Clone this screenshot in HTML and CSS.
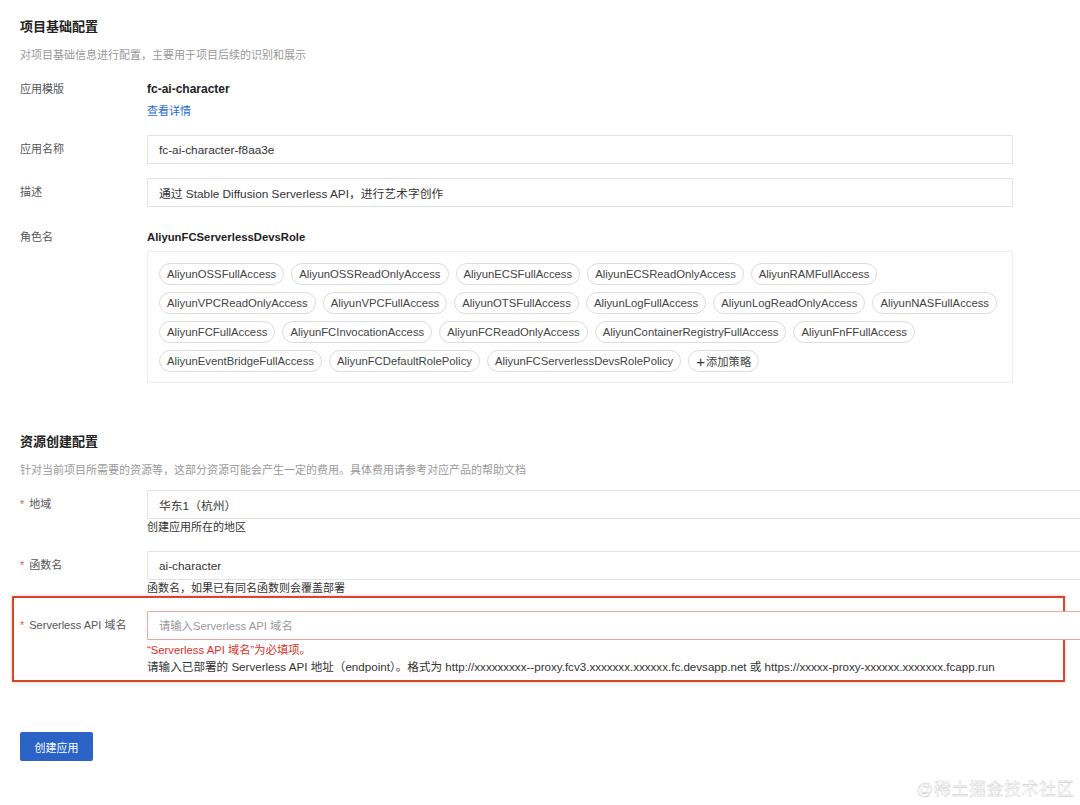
FILE: index.html
```html
<!DOCTYPE html>
<html lang="zh-CN">
<head>
  <meta charset="UTF-8" />
  <meta name="viewport" content="width=device-width, initial-scale=1" />
  <title>创建应用</title>
  <link rel="stylesheet" href="styles.css">
</head>
<body>
  <main class="page">
    <section class="block">
      <h2 class="block-title">项目基础配置</h2>
      <p class="block-desc">对项目基础信息进行配置，主要用于项目后续的识别和展示</p>

      <div class="row row-text">
        <div class="label">应用模版</div>
        <div class="control">
          <div class="value value-lg">fc-ai-character</div>
          <a class="link" href="#">查看详情</a>
        </div>
      </div>

      <div class="row row-input">
        <div class="label">应用名称</div>
        <div class="control">
          <input class="input" type="text" value="fc-ai-character-f8aa3e" />
        </div>
      </div>

      <div class="row row-input row-desc">
        <div class="label">描述</div>
        <div class="control">
          <input class="input" type="text" value="通过 Stable Diffusion Serverless API，进行艺术字创作" />
        </div>
      </div>

      <div class="row row-text row-role">
        <div class="label">角色名</div>
        <div class="control">
          <div class="value">AliyunFCServerlessDevsRole</div>
          <div class="tags">
            <div class="tag-row">
              <span class="tag">AliyunOSSFullAccess</span>
              <span class="tag">AliyunOSSReadOnlyAccess</span>
              <span class="tag">AliyunECSFullAccess</span>
              <span class="tag">AliyunECSReadOnlyAccess</span>
              <span class="tag">AliyunRAMFullAccess</span>
            </div>
            <div class="tag-row">
              <span class="tag">AliyunVPCReadOnlyAccess</span>
              <span class="tag">AliyunVPCFullAccess</span>
              <span class="tag">AliyunOTSFullAccess</span>
              <span class="tag">AliyunLogFullAccess</span>
              <span class="tag">AliyunLogReadOnlyAccess</span>
              <span class="tag">AliyunNASFullAccess</span>
            </div>
            <div class="tag-row">
              <span class="tag">AliyunFCFullAccess</span>
              <span class="tag">AliyunFCInvocationAccess</span>
              <span class="tag">AliyunFCReadOnlyAccess</span>
              <span class="tag">AliyunContainerRegistryFullAccess</span>
              <span class="tag">AliyunFnFFullAccess</span>
            </div>
            <div class="tag-row">
              <span class="tag">AliyunEventBridgeFullAccess</span>
              <span class="tag">AliyunFCDefaultRolePolicy</span>
              <span class="tag">AliyunFCServerlessDevsRolePolicy</span>
              <span class="tag tag-add"><span class="plus">+</span>添加策略</span>
            </div>
          </div>
        </div>
      </div>
    </section>

    <section class="block block-resource">
      <h2 class="block-title">资源创建配置</h2>
      <p class="block-desc">针对当前项目所需要的资源等，这部分资源可能会产生一定的费用。具体费用请参考对应产品的帮助文档</p>

      <div class="row row-input row-region">
        <div class="label"><span class="star">*</span>地域</div>
        <div class="control wide">
          <input class="input" type="text" value="华东1（杭州）" />
          <div class="help">创建应用所在的地区</div>
        </div>
      </div>

      <div class="row row-input row-func">
        <div class="label"><span class="star">*</span>函数名</div>
        <div class="control wide">
          <input class="input" type="text" value="ai-character" />
          <div class="help">函数名，如果已有同名函数则会覆盖部署</div>
        </div>
      </div>

      <div class="highlight">
        <div class="row row-input">
          <div class="label"><span class="star">*</span>Serverless API 域名</div>
          <div class="control wide">
            <input class="input input-error" type="text" placeholder="请输入Serverless API 域名" />
            <div class="error">“Serverless API 域名”为必填项。</div>
            <div class="help help-long">请输入已部署的 Serverless API 地址（endpoint）。格式为 http://xxxxxxxxx--proxy.fcv3.xxxxxxx.xxxxxx.fc.devsapp.net 或 https://xxxxx-proxy-xxxxxx.xxxxxxx.fcapp.run</div>
          </div>
        </div>
      </div>
    </section>

    <button class="btn-primary" type="button">创建应用</button>
  </main>

  <div class="watermark">@稀土掘金技术社区</div>
</body>
</html>
```

FILE: styles.css
```css
:root {
  --text: #333;
  --label: #555;
  --muted: #999;
  --border: #e3e3e3;
  --link: #2a6ad8;
  --primary: #2b63c6;
  --danger: #d93026;
  --star: #e5603b;
  --mark: #d8442c;
}

* {
  margin: 0;
  padding: 0;
  box-sizing: border-box;
}

html, body {
  height: 100%;
  background: #fff;
  overflow: hidden;
}

body {
  font-family: "Liberation Sans", "Noto Sans CJK SC", sans-serif;
  font-size: 11px;
  color: var(--text);
  position: relative;
}

.page {
  padding: 17px 0 0 20px;
  overflow: hidden;
}

.block-title {
  font-size: 13px;
  font-weight: 700;
  line-height: 20px;
  color: #222;
}

.block-desc {
  margin-top: 9px;
  font-size: 11px;
  line-height: 18px;
  color: var(--muted);
}

/* rows */
.row {
  display: flex;
}

.row-input {
  align-items: flex-start;
}

.label {
  width: 127px;
  flex-shrink: 0;
  font-size: 11px;
  color: var(--label);
  line-height: 18px;
}

.row-input .label {
  line-height: 29px;
}

.star {
  color: var(--star);
  margin-right: 5px;
}

.control {
  width: 866px;
  flex-shrink: 0;
}

/* runs off the right edge of the screen, as in the original */
.control.wide {
  width: 934px;
}

.row-text {
  margin-top: 16px;
}

.row-text + .row-input {
  margin-top: 15px;
}

.row-desc {
  margin-top: 14px;
}

.row-role {
  margin-top: 21px;
}

.value {
  font-weight: 700;
  font-size: 11.3px;
  line-height: 18px;
  color: #222;
}

.value-lg {
  font-size: 12px;
}

.link {
  display: block;
  margin-top: 4px;
  line-height: 18px;
  color: var(--link);
  text-decoration: none;
}

.input {
  display: block;
  width: 100%;
  height: 29px;
  padding: 0 11px;
  border: 1px solid var(--border);
  border-radius: 1px;
  background: #fff;
  font-family: inherit;
  font-size: 11.8px;
  color: var(--text);
  outline: none;
}

.input::placeholder {
  color: var(--muted);
  font-size: 11.3px;
}

.input-error {
  border-color: #e8a9a0;
}

/* tags */
.tags {
  margin-top: 5px;
  height: 132px;
  padding: 11px 11px 0;
  border: 1px solid #ececec;
  border-radius: 2px;
}

.tag-row {
  display: flex;
  gap: 7px;
  margin-bottom: 7px;
}

.tag {
  display: inline-flex;
  align-items: center;
  height: 22px;
  padding: 0 7px;
  border: 1px solid #dcdcdc;
  border-radius: 11px;
  font-size: 11.3px;
  color: #444;
  white-space: nowrap;
}

.plus {
  font-size: 15px;
  line-height: 1;
  margin-right: 1px;
  color: #333;
}

/* resource section */
.block-resource {
  margin-top: 49px;
}

.row-region {
  margin-top: 11px;
}

.row-func {
  margin-top: 16px;
}

.help {
  font-size: 11px;
  line-height: 16px;
  color: var(--text);
}

.help-long {
  font-size: 11.6px;
  white-space: nowrap;
}

.error {
  margin-top: 2px;
  font-size: 11.3px;
  line-height: 16px;
  color: var(--danger);
}

.highlight {
  margin-left: -8px;
  width: 1053px;
  padding: 13px 0 5px 6px;
  border: 2px solid var(--mark);
  box-shadow: 0 0 3px rgba(216, 68, 44, 0.35);
}

.highlight .help {
  margin-top: 1px;
}

.btn-primary {
  display: block;
  margin-top: 50px;
  width: 73px;
  height: 29px;
  border: none;
  border-radius: 2px;
  background: var(--primary);
  color: #fff;
  font-family: inherit;
  font-size: 11px;
  cursor: pointer;
}

.watermark {
  position: absolute;
  right: 6px;
  bottom: 3px;
  font-size: 17px;
  line-height: 24px;
  color: #fff;
  -webkit-text-stroke: 0.3px #c0c0c0;
  letter-spacing: 0.5px;
}
```
